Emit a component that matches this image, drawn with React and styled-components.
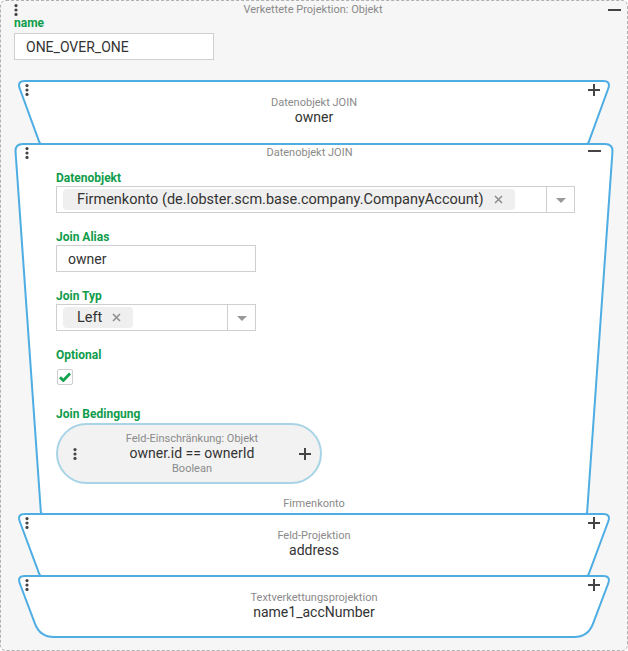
import styled, { createGlobalStyle } from 'styled-components'
import { useLayoutEffect, useRef, useState } from 'react'

const Global = createGlobalStyle`
  html, body { margin: 0; padding: 0; background: #fff; }
  body { font-family: Roboto, "Liberation Sans", Arial, sans-serif; color: #333; }
`

const Outer = styled.div`
  box-sizing: border-box;
  width: 628px;
  height: 651px;
  border: 1px dashed #b0b0b0;
  border-radius: 6px;
  background: #f6f6f6;
  padding: 0 13px;
  position: relative;
`

const Header = styled.div`
  box-sizing: border-box;
  display: flex;
  align-items: center;
  height: 15px;
  padding-top: 2px;
  margin-right: -7px;
`

const SmallTitle = styled.div`
  flex: 1;
  text-align: center;
  font-size: 11px;
  line-height: 13px;
  color: #8a8a8a;
`

const Label = styled.div`
  font-size: 12px;
  font-weight: 700;
  line-height: 14px;
  color: #0f9c4a;
`

const TextInput = styled.div`
  box-sizing: border-box;
  width: ${p => p.$w}px;
  height: 27px;
  margin-top: ${p => p.$mt || 1}px;
  border: 1px solid #cfcfcf;
  background: #fff;
  padding: 0 11px;
  display: flex;
  align-items: center;
  font-size: 14px;
  color: #333;
`

const Stack = styled.div`
  margin-top: 20px;
`

const BlockBox = styled.div`
  position: relative;
  margin: 0 ${p => (p.$wide ? 0 : 2)}px;
  & + & { margin-top: -2px; }
`

const Frame = styled.svg`
  position: absolute;
  top: 0;
  left: 0;
  overflow: visible;
  pointer-events: none;
`

const BlockBody = styled.div`
  position: relative;
  box-sizing: border-box;
  min-height: ${p => p.$h || 0}px;
`

const Corner = styled.div`
  position: absolute;
  top: ${p => p.$top}px;
  ${p => (p.$right !== undefined ? `right: ${p.$right}px;` : `left: ${p.$left}px;`)}
  display: flex;
  line-height: 0;
`

const Summary = styled.div`
  padding-top: 16px;
  text-align: center;
`

const Value = styled.div`
  font-size: 14px;
  line-height: 17px;
  color: #333;
`

const BlockHead = styled.div`
  padding-top: 3px;
  text-align: center;
  font-size: 11px;
  line-height: 13px;
  color: #8a8a8a;
  padding-right: 9px;
`

const Form = styled.div`
  padding: 12px 0 0 42px;
`

const Field = styled.div`
  margin-bottom: ${p => p.$mb ?? 17}px;
`

const Select = styled.div`
  box-sizing: border-box;
  width: ${p => p.$w}px;
  height: 27px;
  margin-top: 1px;
  border: 1px solid #cfcfcf;
  background: #fff;
  display: flex;
  align-items: center;
`

const ChipArea = styled.div`
  flex: 1;
  padding-left: 6px;
  display: flex;
  align-items: center;
`

const Chip = styled.div`
  display: flex;
  align-items: center;
  gap: 10px;
  height: 21px;
  padding: 0 12px 0 14px;
  background: #efefef;
  border-radius: 4px;
  font-size: 14.5px;
  color: #333;
  white-space: nowrap;
`

const Caret = styled.div`
  width: 27px;
  height: 100%;
  border-left: 1px solid #cfcfcf;
  display: flex;
  align-items: center;
  justify-content: center;
  &::after {
    content: '';
    border-left: 5px solid transparent;
    border-right: 5px solid transparent;
    border-top: 5px solid #999;
    margin-top: 2px;
  }
`

const Check = styled.div`
  box-sizing: border-box;
  width: 16px;
  height: 16px;
  margin: 7px 0 0 1px;
  border: 1px solid #cfcfcf;
  border-radius: 2px;
  background: #fff;
  display: flex;
  align-items: center;
  justify-content: center;
`

const Pill = styled.div`
  box-sizing: border-box;
  width: 266px;
  height: 61px;
  margin-top: 2px;
  border: 2px solid #a9d4e6;
  border-radius: 31px;
  background: #f2f2f2;
  display: grid;
  grid-template-columns: 30px 1fr 30px;
  align-items: center;
  padding: 0 9px 0 15px;
  & > svg:last-child { justify-self: end; }
`

const PillText = styled.div`
  text-align: center;
  font-size: 11px;
  line-height: 15px;
  color: #8a8a8a;
  span { display: block; font-size: 14px; line-height: 15px; color: #333; }
`

const Footer = styled.div`
  margin-top: 13px;
  padding-bottom: 5px;
  text-align: center;
  font-size: 11px;
  line-height: 13px;
  color: #8a8a8a;
`

const Kebab = () => (
  <svg width="4" height="12" viewBox="0 0 4 12" fill="#454545">
    <circle cx="2" cy="1.6" r="1.6" />
    <circle cx="2" cy="6" r="1.6" />
    <circle cx="2" cy="10.4" r="1.6" />
  </svg>
)

const Plus = ({ size = 12 }) => (
  <svg width={size} height={size} viewBox="0 0 12 12">
    <path d="M6 0v12M0 6h12" stroke="#444" strokeWidth="2" />
  </svg>
)

const Minus = () => (
  <svg width="13" height="12" viewBox="0 0 13 12">
    <path d="M0 6h13" stroke="#444" strokeWidth="2" />
  </svg>
)

const Cross = () => (
  <svg width="9" height="9" viewBox="0 0 9 9">
    <path d="M1 1l7 7M8 1l-7 7" stroke="#8c8c8c" strokeWidth="1.5" />
  </svg>
)

const CheckMark = () => (
  <svg width="12" height="10" viewBox="0 0 12 10">
    <path d="M1 5.2l3.3 3.3L11 1.6" fill="none" stroke="#12a14d" strokeWidth="2.8" />
  </svg>
)

function useSize(ref) {
  const [size, setSize] = useState({ w: 0, h: 0 })
  useLayoutEffect(() => {
    const el = ref.current
    const measure = () => setSize({ w: el.offsetWidth, h: el.offsetHeight })
    measure()
    const ro = new ResizeObserver(measure)
    ro.observe(el)
    return () => ro.disconnect()
  }, [ref])
  return size
}

// trapezoid outline, wide at the top, with rounded corners
function framePath(w, h, inset, rt, rb) {
  const s = 1
  const len = Math.hypot(inset, h - 2 * s)
  const ux = inset / len, uy = (h - 2 * s) / len
  const TL = [s, s], TR = [w - s, s], BR = [w - s - inset, h - s], BL = [s + inset, h - s]
  const p = (x, y) => `${x.toFixed(2)} ${y.toFixed(2)}`
  return [
    `M${p(TL[0] + ux * rt, TL[1] + uy * rt)}`,
    `Q${p(...TL)} ${p(TL[0] + rt, TL[1])}`,
    `L${p(TR[0] - rt, TR[1])}`,
    `Q${p(...TR)} ${p(TR[0] - ux * rt, TR[1] + uy * rt)}`,
    `L${p(BR[0] + ux * rb, BR[1] - uy * rb)}`,
    `Q${p(...BR)} ${p(BR[0] - rb, BR[1])}`,
    `L${p(BL[0] + rb, BL[1])}`,
    `Q${p(...BL)} ${p(BL[0] - ux * rb, BL[1] - uy * rb)}`,
    'Z',
  ].join(' ')
}

function Block({ wide, last, inset = 23, h, action = 'plus', children }) {
  const ref = useRef(null)
  const { w, h: hh } = useSize(ref)
  return (
    <BlockBox ref={ref} $wide={wide}>
      {w > 0 && (
        <Frame width={w} height={hh}>
          <path d={framePath(w, hh, inset, 8, last ? 14 : 2)} fill="#fff" stroke="#4eade3" strokeWidth="2" />
        </Frame>
      )}
      <BlockBody $h={h}>
        <Corner $top={4} $left={wide ? 11 : 9}><Kebab /></Corner>
        {action === 'plus'
          ? <Corner $top={4} $right={12}><Plus /></Corner>
          : <Corner $top={2} $right={13}><Minus /></Corner>}
        {children}
      </BlockBody>
    </BlockBox>
  )
}

function Collapsed({ title, value, last, h = 65 }) {
  return (
    <Block last={last} h={h}>
      <Summary>
        <SmallTitle>{title}</SmallTitle>
        <Value>{value}</Value>
      </Summary>
    </Block>
  )
}

export default function App() {
  return (
    <>
      <Global />
      <Outer>
        <Header>
          <Kebab />
          <SmallTitle>Verkettete Projektion: Objekt</SmallTitle>
          <Minus />
        </Header>
        <Label>name</Label>
        <TextInput $w={200} $mt={3}>ONE_OVER_ONE</TextInput>

        <Stack>
          <Collapsed title="Datenobjekt JOIN" value="owner" h={65} />

          <Block wide inset={26} action="minus">
            <BlockHead>Datenobjekt JOIN</BlockHead>
            <Form>
              <Field>
                <Label>Datenobjekt</Label>
                <Select $w={519}>
                  <ChipArea>
                    <Chip>Firmenkonto (de.lobster.scm.base.company.CompanyAccount)<Cross /></Chip>
                  </ChipArea>
                  <Caret />
                </Select>
              </Field>
              <Field>
                <Label>Join Alias</Label>
                <TextInput $w={200}>owner</TextInput>
              </Field>
              <Field>
                <Label>Join Typ</Label>
                <Select $w={200}>
                  <ChipArea>
                    <Chip>Left<Cross /></Chip>
                  </ChipArea>
                  <Caret />
                </Select>
              </Field>
              <Field $mb={22}>
                <Label>Optional</Label>
                <Check><CheckMark /></Check>
              </Field>
              <Field $mb={0}>
                <Label>Join Bedingung</Label>
                <Pill>
                  <Kebab />
                  <PillText>
                    Feld-Einschränkung: Objekt
                    <span>owner.id == ownerId</span>
                    Boolean
                  </PillText>
                  <Plus />
                </Pill>
              </Field>
            </Form>
            <Footer>Firmenkonto</Footer>
          </Block>

          <Collapsed title="Feld-Projektion" value="address" h={64} />
          <Collapsed title="Textverkettungsprojektion" value="name1_accNumber" h={63} last />
        </Stack>
      </Outer>
    </>
  )
}
